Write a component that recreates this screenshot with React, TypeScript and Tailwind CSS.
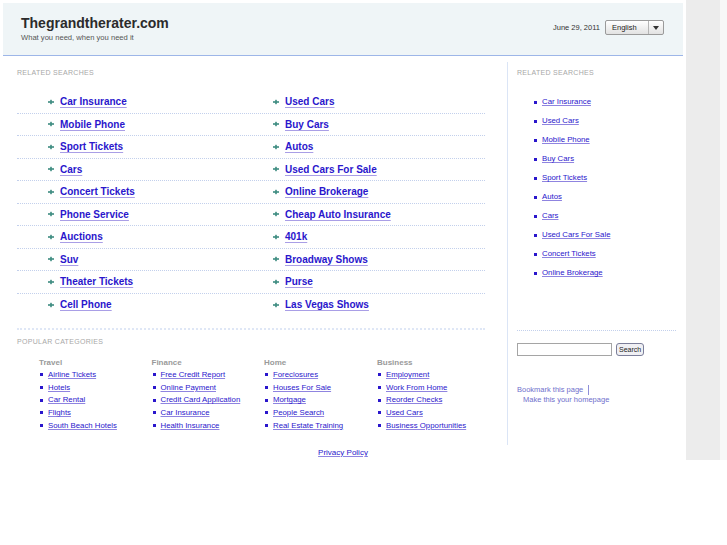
const mainLeft = [
  "Car Insurance",
  "Mobile Phone",
  "Sport Tickets",
  "Cars",
  "Concert Tickets",
  "Phone Service",
  "Auctions",
  "Suv",
  "Theater Tickets",
  "Cell Phone",
];

const mainRight = [
  "Used Cars",
  "Buy Cars",
  "Autos",
  "Used Cars For Sale",
  "Online Brokerage",
  "Cheap Auto Insurance",
  "401k",
  "Broadway Shows",
  "Purse",
  "Las Vegas Shows",
];

const sideLinks = [
  "Car Insurance",
  "Used Cars",
  "Mobile Phone",
  "Buy Cars",
  "Sport Tickets",
  "Autos",
  "Cars",
  "Used Cars For Sale",
  "Concert Tickets",
  "Online Brokerage",
];

const categories = [
  { title: "Travel", items: ["Airline Tickets", "Hotels", "Car Rental", "Flights", "South Beach Hotels"] },
  {
    title: "Finance",
    items: ["Free Credit Report", "Online Payment", "Credit Card Application", "Car Insurance", "Health Insurance"],
  },
  { title: "Home", items: ["Foreclosures", "Houses For Sale", "Mortgage", "People Search", "Real Estate Training"] },
  {
    title: "Business",
    items: ["Employment", "Work From Home", "Reorder Checks", "Used Cars", "Business Opportunities"],
  },
];

function PlusBullet() {
  return (
    <svg width="6" height="6" viewBox="0 0 6 6" className="shrink-0">
      <rect x="0" y="2.2" width="6" height="1.6" fill="#3d8c80" />
      <rect x="2.2" y="0.8" width="1.6" height="4.4" fill="#3d8c80" />
    </svg>
  );
}

function MainLink({ label }: { label: string }) {
  return (
    <div className="flex items-center gap-[6px]">
      <PlusBullet />
      <a href="#" className="text-[10px] font-bold text-[#2a16cc] underline decoration-[#a99ee6] underline-offset-2">
        {label}
      </a>
    </div>
  );
}

function SmallLink({ label, gap }: { label: string; gap: string }) {
  return (
    <div className={`flex items-center ${gap}`}>
      <span className="w-[3px] h-[3px] bg-[#2a16cc] shrink-0" />
      <a href="#" className="text-[7.8px] text-[#2a16cc] underline decoration-[#8f84e0] underline-offset-1">
        {label}
      </a>
    </div>
  );
}

export default function App() {
  return (
    <div className="w-[727px] h-[545px] bg-white flex font-['Liberation_Sans',Arial,sans-serif] text-[#333] overflow-hidden">
      <div className="w-[686px] flex flex-col">
        {/* Header */}
        <div className="mx-[3px] mt-[3px] h-[53px] bg-[#eff5f7] border-b border-[#9db6e8] flex justify-between pl-[18px] pr-[19px]">
          <div className="pt-[11px]">
            <div className="text-[14px] leading-[18px] font-bold text-[#2b2b2b]">Thegrandtherater.com</div>
            <div className="mt-[1px] text-[7.6px] leading-[10px] text-[#555]">What you need, when you need it</div>
          </div>
          <div className="pt-[17px] flex items-start gap-[5px]">
            <span className="text-[7.5px] leading-[15px] text-[#333]">June 29, 2011</span>
            <div className="w-[59px] h-[15px] border border-[#9a9a9a] rounded-[2px] bg-gradient-to-b from-white to-[#e2e2e2] flex">
              <span className="flex-1 pl-[6px] text-[7.5px] leading-[13px] text-[#222]">English</span>
              <span className="w-[15px] border-l border-[#b5b5b5] flex items-center justify-center">
                <svg width="6" height="4" viewBox="0 0 6 4">
                  <path d="M0 0 L6 0 L3 4 Z" fill="#333" />
                </svg>
              </span>
            </div>
          </div>
        </div>

        {/* Body */}
        <div className="flex">
          {/* Left column */}
          <div className="w-[507px] pl-[17px] pr-[22px] pt-[12px] pb-[13px]">
            <div className="text-[7px] leading-[10px] text-[#a8a8a8] tracking-[0.3px]">RELATED SEARCHES</div>
            <div className="mt-[13px]">
              {mainLeft.map((l, i) => (
                <div
                  key={l}
                  className={`h-[22.5px] flex items-center ${
                    i < mainLeft.length - 1 ? "border-b border-dotted border-[#c3d0ec]" : ""
                  }`}
                >
                  <div className="w-[256px] pl-[31px]">
                    <MainLink label={l} />
                  </div>
                  <MainLink label={mainRight[i]} />
                </div>
              ))}
            </div>
            <div className="mt-[12px] border-t-2 border-dotted border-[#dfe7f6]" />
            <div className="mt-[7px] text-[7px] leading-[10px] text-[#a8a8a8] tracking-[0.3px]">POPULAR CATEGORIES</div>
            <div className="mt-[9.5px] pl-[22px] grid grid-cols-[112.5px_112.5px_113px_110px]">
              {categories.map((c) => (
                <div key={c.title}>
                  <div className="text-[8px] leading-[11px] font-bold text-[#9a9a9a]">{c.title}</div>
                  <div className="mt-[1px] pl-[1px]">
                    {c.items.map((it) => (
                      <div key={it} className="h-[12.7px] flex items-center">
                        <SmallLink label={it} gap="gap-[5px]" />
                      </div>
                    ))}
                  </div>
                </div>
              ))}
            </div>
          </div>

          {/* Right column */}
          <div className="flex-1 mt-[6px] border-l border-[#dbe5f6] pl-[9px] pt-[6px]">
            <div className="text-[7px] leading-[10px] text-[#a8a8a8] tracking-[0.3px]">RELATED SEARCHES</div>
            <div className="mt-[14.5px] pl-[17px]">
              {sideLinks.map((l) => (
                <div key={l} className="h-[19px] flex items-center">
                  <SmallLink label={l} gap="gap-[5px]" />
                </div>
              ))}
            </div>
            <div className="mt-[47px] w-[159px] border-t border-dotted border-[#c3d0ec]" />
            <div className="mt-[12px] flex items-center gap-[4px]">
              <div className="w-[95px] h-[13px] border border-[#a5a5a5] bg-white" />
              <button className="h-[13px] px-[2px] border border-[#7c7f9a] rounded-[3px] bg-[#f0f0f4] text-[7px] leading-[11px] text-[#222]">
                Search
              </button>
            </div>
            <div className="mt-[29px] text-[7.5px] leading-[10px] text-[#6f6fcc]">
              <div className="flex items-center">
                <span>Bookmark this page</span>
                <span className="ml-[5px] h-[10px] border-l border-[#8f8fd8]" />
              </div>
              <div className="pl-[6px]">Make this your homepage</div>
            </div>
          </div>
        </div>

        {/* Footer */}
        <div className="mt-[2px] text-center text-[8px] leading-[12px]">
          <a href="#" className="text-[#2a16cc] underline decoration-[#8f84e0]">
            Privacy Policy
          </a>
        </div>
      </div>

      {/* Right strip */}
      <div className="w-[34px] h-[460px] bg-[#ececec]" />
      <div className="w-[7px] h-[460px] bg-[#f7f7f7]" />
    </div>
  );
}
